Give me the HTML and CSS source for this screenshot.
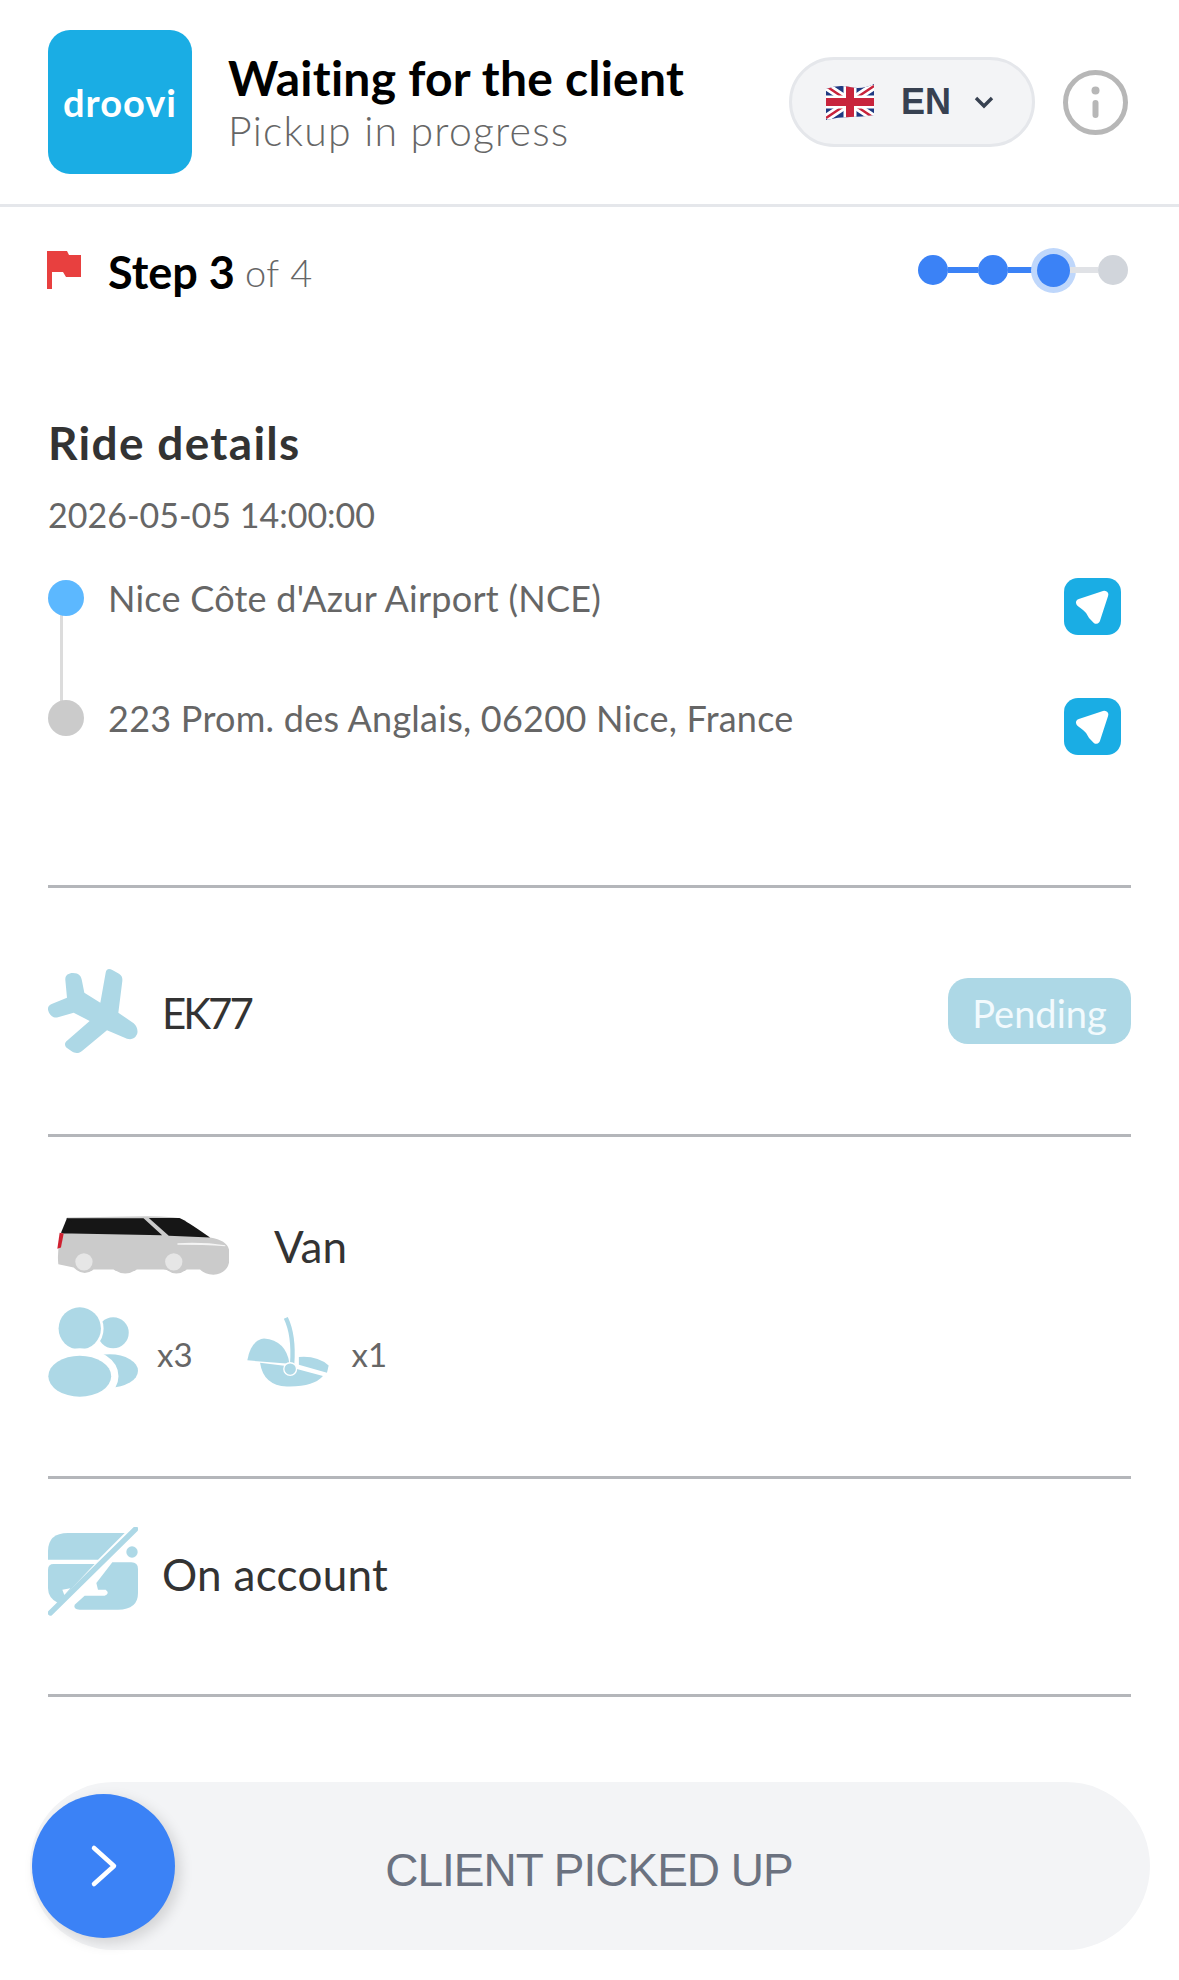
FILE: index.html
```html
<!DOCTYPE html>
<html lang="en">
<head>
<meta charset="utf-8">
<title>Waiting for the client</title>
<link rel="stylesheet" href="styles.css">
</head>
<body>
<header class="top">
  <div class="logo"><span>droovi</span></div>
  <div class="heading">
    <h1>Waiting for the client</h1>
    <p>Pickup in progress</p>
  </div>
  <div class="lang">
    <svg class="uk" viewBox="0 0 48 36">
      <defs><clipPath id="fl"><path d="M0 5Q12 0 24 3T48 0V31Q36 33 24 33T0 36Z"/></clipPath></defs>
      <g clip-path="url(#fl)">
        <rect width="48" height="36" fill="#1f3a82"/>
        <path d="M0 2L48 34M48 2L0 34" stroke="#fff" stroke-width="8"/>
        <path d="M0 2L48 34M48 2L0 34" stroke="#c8243c" stroke-width="2.5"/>
        <path d="M24 0V36M0 18H48" stroke="#fff" stroke-width="13"/>
        <path d="M24 0V36M0 18H48" stroke="#c8243c" stroke-width="8"/>
      </g>
    </svg>
    <span class="code">EN</span>
    <svg class="chev" viewBox="0 0 20 14"><path d="M2 3l8 8 8-8" fill="none" stroke="#374151" stroke-width="3.4"/></svg>
  </div>
  <svg class="info" viewBox="0 0 65 65"><circle cx="32.5" cy="32.5" r="30" fill="none" stroke="#b7b7b7" stroke-width="5"/><circle cx="32.5" cy="20.5" r="4" fill="#b7b7b7"/><path d="M32.5 33V45" stroke="#b7b7b7" stroke-width="6" stroke-linecap="round"/></svg>
</header>

<main class="content">
  <div class="step-row">
    <div class="step-label">
      <svg class="flag" viewBox="0 0 34 38"><path d="M0 0H20L22 4H34V26H19L16 21H5V38H0Z" fill="#e8403f"/></svg>
      <span class="step-now">Step 3</span>
      <span class="step-of">of 4</span>
    </div>
    <div class="stepper">
      <i class="dot on"></i><i class="link on"></i>
      <i class="dot on"></i><i class="link on tight"></i>
      <i class="dot on now"></i><i class="link last"></i>
      <i class="dot"></i>
    </div>
  </div>

  <section class="ride">
    <h2>Ride details</h2>
    <div class="date">2026-05-05 14:00:00</div>
    <div class="route">
      <div class="stop">
        <i class="pin from"></i>
        <span class="addr">Nice Côte d'Azur Airport (NCE)</span>
        <svg class="nav" viewBox="70 52 170 170"><rect x="70" y="52" width="170" height="170" rx="42" fill="#1aade4"/><path d="M190 102L118 126Q140 142 146 150Q152 164 166 176Z" fill="#fff" stroke="#fff" stroke-width="24" stroke-linejoin="round"/></svg>
      </div>
      <div class="stop">
        <i class="pin to"></i>
        <span class="addr">223 Prom. des Anglais, 06200 Nice, France</span>
        <svg class="nav" viewBox="70 52 170 170"><rect x="70" y="52" width="170" height="170" rx="42" fill="#1aade4"/><path d="M190 102L118 126Q140 142 146 150Q152 164 166 176Z" fill="#fff" stroke="#fff" stroke-width="24" stroke-linejoin="round"/></svg>
      </div>
    </div>
  </section>

  <section class="flight">
    <svg class="ico" viewBox="55 50 270 270"><path d="M130 71C148 71 155 80 157 95L164 130L212 160L228 70C230 58 238 56 248 62L268 73C276 78 279 85 278 95L266 190L312 222C322 230 326 245 322 255C316 268 305 272 292 268L232 243L158 304C148 313 136 313 126 306L112 296C104 289 104 280 112 274L180 215L132 190L85 204C72 207 64 200 58 190C52 178 54 170 66 164L112 145L107 92C106 78 116 71 130 71Z" fill="#add8e6"/></svg>
    <span class="label flight-no">EK77</span>
    <span class="badge">Pending</span>
  </section>

  <section class="vehicle">
    <div class="car-row">
      <svg class="car" viewBox="80 75 520 185">
        <path d="M84 222C80 190 86 150 100 115L110 82L350 78Q430 78 455 86L540 142Q590 150 597 178V218Q590 250 550 254Q522 252 510 238H470Q440 262 410 240Q405 238 400 238H320Q285 262 250 238H190Q160 262 130 232Z" fill="#cbcbcb"/>
        <path d="M125 100L108 84L340 84L396 135L125 130Z" fill="#161616"/>
        <path d="M356 83H448Q470 92 540 142L416 137Z" fill="#161616"/>
        <path d="M110 84L125 96V130L100 130L92 128Z" fill="#161616"/>
        <path d="M88 128L100 130L92 172L81 176Z" fill="#cf2030"/>
        <path d="M442 159Q520 155 586 165V168Q520 164 442 164Z" fill="#f4f4f4"/>
        <circle cx="161" cy="215" r="26" fill="#e6e6e6"/>
        <circle cx="431" cy="215" r="26" fill="#e6e6e6"/>
      </svg>
      <span class="label">Van</span>
    </div>
    <div class="extras">
      <svg class="ico" viewBox="53 352 272 272">
        <circle cx="250" cy="430" r="47" fill="#add8e6"/>
        <ellipse cx="240" cy="545" rx="85" ry="50" fill="#add8e6"/>
        <circle cx="149" cy="417" r="64" fill="#add8e6" stroke="#fff" stroke-width="16" paint-order="stroke"/>
        <ellipse cx="149" cy="561" rx="95" ry="62" fill="#add8e6" stroke="#fff" stroke-width="44" paint-order="stroke"/>
      </svg>
      <span class="count">x3</span>
      <svg class="seat" viewBox="645 380 260 220">
        <path d="M767 388Q792 440 786 525" fill="none" stroke="#add8e6" stroke-width="13"/>
        <path d="M652 515Q662 455 702 450Q768 456 778 525Z" fill="#add8e6"/>
        <path d="M806 505Q860 500 895 530L890 552L806 528Z" fill="#add8e6"/>
        <path d="M690 522L762 531Q780 566 800 541L878 562Q850 595 770 593Q700 590 690 522Z" fill="#add8e6"/>
        <circle cx="780" cy="541" r="19" fill="#add8e6" stroke="#fff" stroke-width="4"/>
      </svg>
      <span class="count">x1</span>
    </div>
  </section>

  <section class="payment">
    <svg class="ico" viewBox="55 52 270 270">
      <path d="M55 150V125Q55 70 115 70H285L205 150Z" fill="#add8e6"/>
      <path d="M72 163H195L85 280Q55 265 55 235V180Q55 163 72 163Z" fill="#add8e6"/>
      <path d="M248 158H305Q325 158 325 178V250Q325 300 265 300H150Q130 298 135 285L165 258H225Q242 250 228 240H205L200 220Z" fill="#add8e6"/>
      <path d="M98 240L122 236L104 256Z" fill="#fff"/>
      <circle cx="307" cy="127" r="17" fill="#add8e6"/>
      <path d="M62 310L318 58" stroke="#add8e6" stroke-width="16" stroke-linecap="round"/>
    </svg>
    <span class="label account">On account</span>
  </section>
</main>

<div class="slider">
  <button class="thumb"><svg viewBox="0 0 28 44"><path d="M4 4L24 22L4 40" fill="none" stroke="#fff" stroke-width="4.5" stroke-linecap="round" stroke-linejoin="round"/></svg></button>
  <span class="slide-text">CLIENT PICKED UP</span>
</div>
</body>
</html>
```

FILE: styles.css
```css
* { box-sizing: border-box; }
html, body { margin: 0; padding: 0; }
body {
  width: 1179px;
  height: 1980px;
  overflow: hidden;
  background: #fff;
  font-family: "Lato", "Noto Sans", sans-serif;
  color: #333;
}
h1, h2, p { margin: 0; font: inherit; }

.top {
  height: 207px;
  display: flex;
  align-items: center;
  padding: 0 51px 0 48px;
  border-bottom: 3px solid #e5e7eb;
}
.logo {
  width: 144px;
  height: 144px;
  border-radius: 22px;
  background: #1aade4;
  display: flex;
  align-items: center;
  justify-content: center;
  color: #fff;
  font-weight: 700;
  font-size: 38px;
  letter-spacing: 1px;
}
.heading { margin-left: 36px; padding-top: 3px; }
.heading h1 { font-size: 48px; line-height: 54px; font-weight: 700; letter-spacing: .25px; color: #000; }
.heading p { font-size: 41px; line-height: 51px; font-weight: 300; letter-spacing: 1.2px; color: #666; }
.lang {
  margin-left: auto;
  width: 246px;
  height: 90px;
  border: 3px solid #e5e7eb;
  border-radius: 45px;
  background: #f3f4f6;
  display: flex;
  align-items: center;
  padding-left: 34px;
}
.uk { width: 48px; height: 36px; }
.code { margin-left: 27px; font: 700 36px "Liberation Sans", sans-serif; color: #374151; }
.chev { width: 20px; height: 14px; margin-left: 23px; }
.info { width: 65px; height: 65px; margin-left: 28px; }

.content { padding: 0 48px; }

.step-row {
  height: 126px;
  display: flex;
  align-items: center;
  justify-content: space-between;
  padding-right: 3px;
}
.step-label { display: flex; align-items: center; margin-left: -1px; }
.flag { width: 34px; height: 38px; }
.step-now { margin-left: 27px; padding-top: 4px; font-size: 45px; font-weight: 700; color: #000; }
.step-of { margin-left: 10px; padding-top: 4px; font-size: 38px; font-weight: 300; letter-spacing: .6px; color: #666; }
.stepper { display: flex; align-items: center; }
.dot { width: 30px; height: 30px; border-radius: 50%; background: #d1d5db; flex: none; }
.dot.on { background: #3b82f6; }
.dot.now { width: 33px; height: 33px; box-shadow: 0 0 0 6px #bfd7fb; }
.link { width: 30px; height: 6px; background: #e0e2e6; flex: none; }
.link.tight { width: 29px; }
.link.last { width: 28px; }
.link.on { background: #3b82f6; }

.ride { height: 552px; padding-top: 82px; }
.ride h2 { font-size: 46px; line-height: 56px; font-weight: 700; letter-spacing: 1.3px; color: #333; }
.date { margin-top: 23px; font-size: 34px; line-height: 42px; color: #666; }
.route { position: relative; margin-top: 28px; }
.route::before {
  content: "";
  position: absolute;
  left: 12px;
  top: 50px;
  width: 3px;
  height: 90px;
  background: #dcdcdc;
}
.stop { height: 120px; display: flex; align-items: flex-start; position: relative; }
.pin { width: 36px; height: 36px; border-radius: 50%; flex: none; margin-top: 16px; }
.pin.from { background: #5cb8ff; }
.pin.to { background: #cbcbcb; }
.addr { margin-left: 24px; font-size: 36px; letter-spacing: .25px; line-height: 42px; margin-top: 13px; color: #666; }
.nav { width: 57px; height: 57px; margin-left: auto; margin-right: 10px; margin-top: 14px; }

.flight, .vehicle, .payment { border-top: 3px solid #b4b6ba; }
.flight { height: 249px; display: flex; align-items: center; }
.ico { width: 90px; height: 90px; flex: none; }
.label { margin-left: 24px; margin-top: 4px; font-size: 44px; color: #333; }
.flight-no { font-size: 42px; letter-spacing: -3px; }
.account { letter-spacing: .3px; }
.badge {
  margin-left: auto;
  width: 183px;
  height: 66px;
  padding-top: 3px;
  border-radius: 20px;
  background: #add8e6;
  color: #f2fafd;
  display: flex;
  align-items: center;
  justify-content: center;
  font-size: 38px;
}

.vehicle { height: 342px; padding-top: 78px; }
.car-row { display: flex; align-items: center; padding-left: 9px; }
.car { width: 173px; height: 62px; }
.car-row .label { margin-left: 44px; margin-top: 0; }
.extras { display: flex; align-items: center; margin-top: 30px; }
.count { margin-left: 19px; margin-top: 4px; font-size: 33px; color: #666; }
.seat { width: 87px; height: 74px; margin-left: 52px; }
.seat + .count { margin-left: 20px; }

.payment { height: 221px; display: flex; align-items: center; padding-bottom: 30px; border-bottom: 3px solid #b4b6ba; }

.slider {
  display: flex;
  position: relative;
  align-items: center;
  justify-content: center;
  width: 1120px;
  height: 168px;
  margin: 85px 0 0 30px;
  border-radius: 84px;
  background: #f3f4f6;
}
.thumb {
  position: absolute;
  left: 2px;
  top: 12px;
  width: 143px;
  height: 144px;
  border: 0;
  padding: 0;
  border-radius: 50%;
  background: #3b82f6;
  box-shadow: 5px 5px 14px rgba(0,0,0,.14);
  display: flex;
  align-items: center;
  justify-content: center;
}
.thumb svg { width: 28px; height: 44px; }
.slide-text { margin-left: -2px; margin-top: 7px; font: 400 46px "Liberation Sans", sans-serif; letter-spacing: -1px; color: #6b7280; }
```
